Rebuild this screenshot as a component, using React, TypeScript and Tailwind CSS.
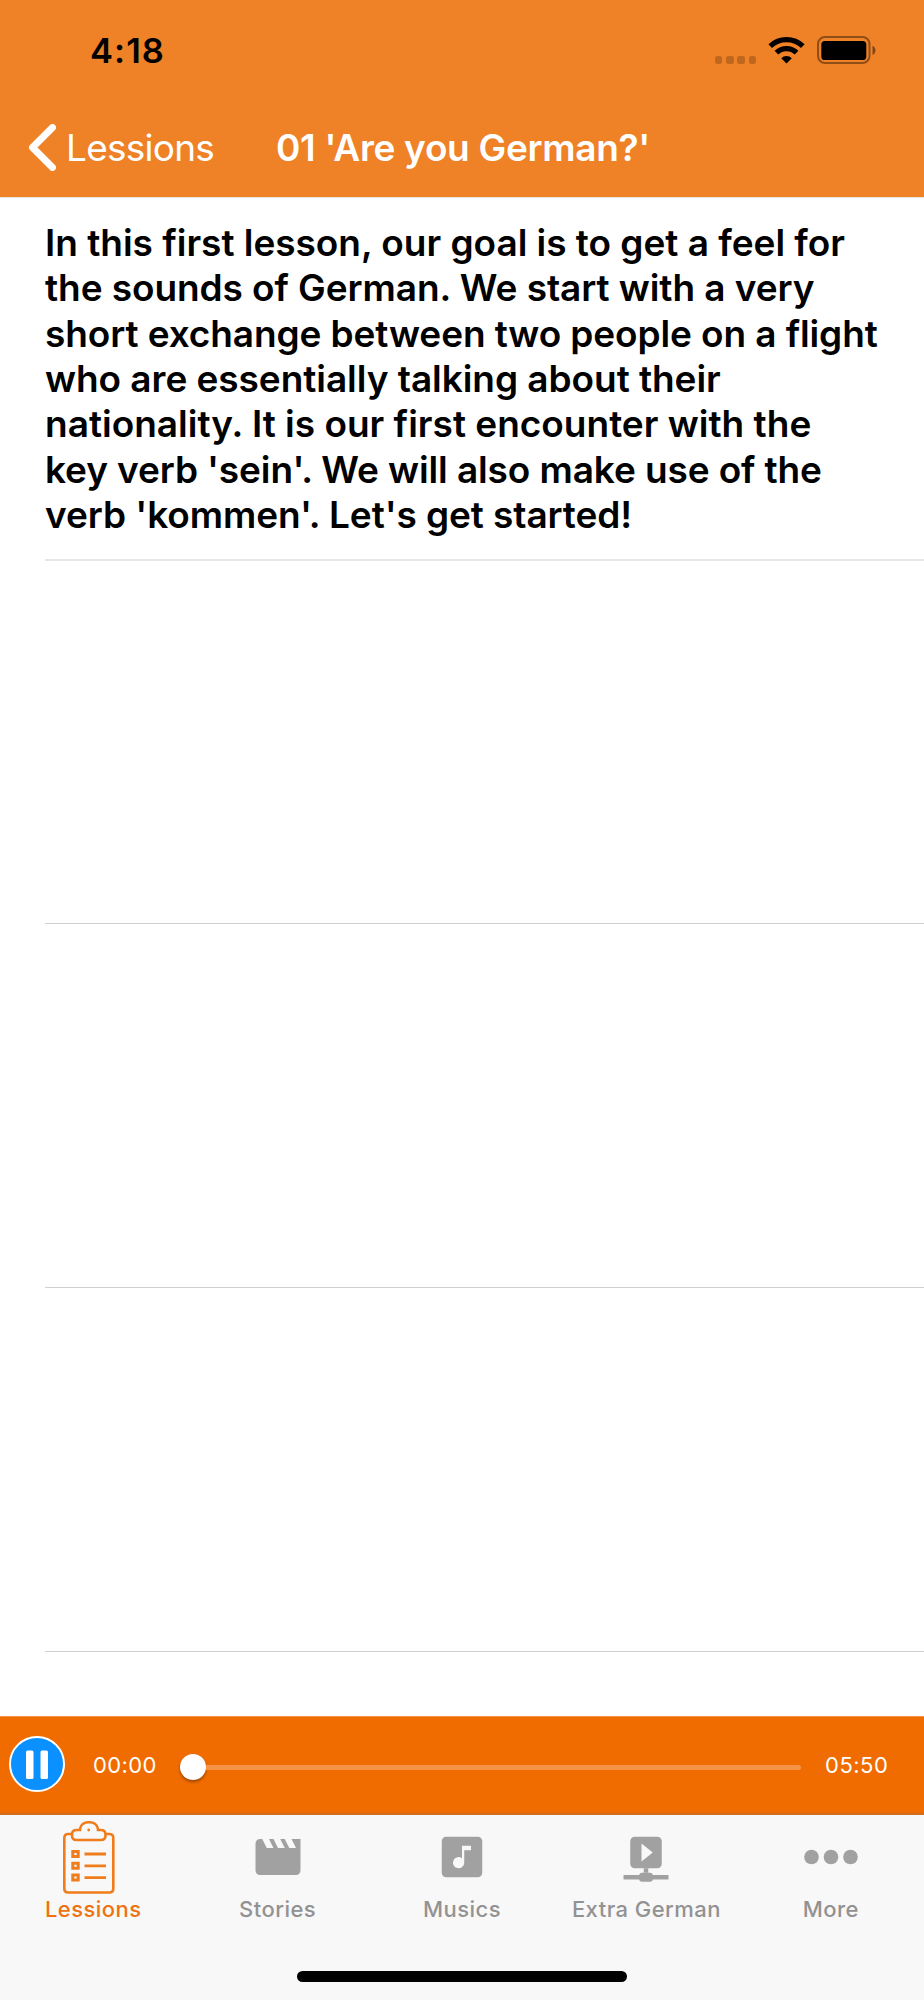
import type { ReactNode } from "react";

const intro = [
  { text: "In this first lesson, our goal is to get a feel for", tracking: "tracking-[-0.02px]" },
  { text: "the sounds of German. We start with a very", tracking: "tracking-[-0.07px]" },
  { text: "short exchange between two people on a flight", tracking: "tracking-[-0.1px]" },
  { text: "who are essentially talking about their", tracking: "tracking-[-0.05px]" },
  { text: "nationality. It is our first encounter with the", tracking: "tracking-[0px]" },
  { text: "key verb 'sein'. We will also make use of the", tracking: "tracking-[-0.11px]" },
  { text: "verb 'kommen'. Let's get started!", tracking: "tracking-[-0.08px]" },
];

const StatusBar = () => (
  <div className="flex h-[99px] items-start pl-[90px] pr-[47px] text-black">
    <span className="mt-[30px] text-[34.5px] leading-[42px] font-semibold tracking-[1.1px]">4:18</span>
    <div className="mt-[36px] ml-auto flex items-start">
      <div className="mt-[20px] flex gap-[3.7px]">
        {[0, 1, 2, 3].map((dot) => (
          <span key={dot} className="h-[7.5px] w-[7.5px] rounded-[2.5px] bg-black/20" />
        ))}
      </div>
      <svg className="ml-[12px]" width="37" height="28" viewBox="0 0 37 28" fill="none" stroke="black">
        <path d="M2.2 10.2a23.5 23.5 0 0 1 32.6 0" strokeWidth="5.2" />
        <path d="M8.4 16.6a14.6 14.6 0 0 1 20.2 0" strokeWidth="5.2" />
        <path d="M13.2 22.2a7.6 7.6 0 0 1 10.6 0L18.5 27.4z" fill="black" stroke="none" />
      </svg>
      <svg className="ml-[12px]" width="60" height="28" viewBox="0 0 60 28">
        <rect x="1" y="1" width="51.5" height="26" rx="7" fill="none" stroke="black" strokeOpacity="0.4" strokeWidth="2" />
        <rect x="4.3" y="5" width="45" height="19" rx="3.6" />
        <path d="M55.5 9.7c4 1.6 4 7.6 0 9.2z" fillOpacity="0.45" />
      </svg>
    </div>
  </div>
);

const NavBar = () => (
  <div className="flex h-[98px] items-start pl-[28px] text-white">
    <svg className="mt-[25px] shrink-0" width="28" height="47" viewBox="0 0 28 47" fill="none" stroke="currentColor">
      <path d="M24.5 3.5L4.500 23.5L24.500 43.5" strokeWidth="7" strokeLinecap="round" strokeLinejoin="round" />
    </svg>
    <span className="mt-[27px] ml-[10px] w-[210px] text-[37px] leading-[44px] font-normal tracking-[-0.75px]">
      Lessions
    </span>
    <h1 className="mt-[27px] text-[37px] leading-[44px] font-semibold tracking-[-0.3px] whitespace-nowrap">
      01 'Are you German?'
    </h1>
  </div>
);

const Player = () => (
  <div className="flex h-[99px] items-start border-t border-b-2 border-t-[#f4924a] border-b-[#cd6f21] bg-[#f06c00] pl-[9px] text-white">
    <svg className="mt-[19px] shrink-0" width="56" height="56" viewBox="0 0 56 56">
      <circle cx="28" cy="28" r="27" fill="#0a90ff" stroke="white" strokeWidth="2" />
      <rect x="17" y="14.5" width="7.5" height="28.5" rx="1.5" fill="white" />
      <rect x="31.5" y="14.5" width="7.5" height="28.5" rx="1.5" fill="white" />
    </svg>
    <span className="mt-[34px] ml-[28px] w-[87px] text-[22px] leading-[28px] tracking-[0.4px]">00:00</span>
    <div className="mt-[37px] flex items-center">
      <span className="h-[26px] w-[26px] rounded-full bg-white shadow-[0_2px_3px_rgba(0,0,0,0.35)]" />
      <span className="mt-px h-[4.5px] w-[595px] rounded-r-full bg-[#f59446]" />
    </div>
    <span className="mt-[34px] ml-[24px] text-[22px] leading-[28px] tracking-[0.5px]">05:50</span>
  </div>
);

const ClipboardIcon = () => (
  <svg width="52" height="73" viewBox="0 0 52 73" fill="none" stroke="#ef7d1c" strokeWidth="2.6">
    <path d="M9 13H5.300q-4 0-4 4v50.500q0 4 4 4h41q4 0 4-4V17q0-4-4-4h-4" />
    <path d="M13.500 9h3.500v-1c1-9 17-9 18 0v1h3q4.500 0 4.500 4.500v1q0 4.500-4.500 4.500h-24.500q-4.500 0-4.500-4.500v-1q0-4.500 4.500-4.500z" />
    <circle cx="25.700" cy="9" r="1.400" fill="#ef7d1c" stroke="none" />
    <path d="M9.800 30.500h5.400v5h-5.400zM9.800 42.300h5.400v5h-5.400zM9.800 54.100h5.400v5h-5.400z" strokeWidth="3" />
    <path d="M21.500 33h21.500M21.500 44.800h21.500M21.500 56.600h21.500" strokeWidth="2.800" />
  </svg>
);

const MovieIcon = () => (
  <svg width="54" height="54" viewBox="0 0 24 24" fill="#a1a1a1">
    <path d="M18 4l2 4h-3l-2-4h-2l2 4h-3l-2-4H8l2 4H7L5 4H4c-1.100 0-2 .9-2 2v12c0 1.100.9 2 2 2h16c1.100 0 2-.9 2-2V4z" />
  </svg>
);

const MusicIcon = () => (
  <svg width="54" height="54" viewBox="0 0 24 24" fill="#a1a1a1">
    <rect x="3" y="3" width="18" height="18" rx="2" />
    <path d="M12 7h4v2h-3v5.500a2.500 2.500 0 1 1-1-2z" fill="#f8f8f8" />
  </svg>
);

const NetworkIcon = () => (
  <svg width="54" height="54" viewBox="0 0 24 24" fill="#a1a1a1">
    <rect x="5" y="3" width="14" height="14" rx="2" />
    <path d="M10 6v8l5-4z" fill="#f8f8f8" />
    <path d="M11 17h2v2h-2zM2 20h20v2H2z" />
    <rect x="9" y="19" width="6" height="4" rx="1.200" />
  </svg>
);

const MoreIcon = () => (
  <svg width="54" height="54" viewBox="0 0 54 54" fill="#a1a1a1">
    <circle cx="7.500" cy="27" r="7.300" />
    <circle cx="27" cy="27" r="7.300" />
    <circle cx="46.500" cy="27" r="7.300" />
  </svg>
);

const Tab = ({ label, icon, active = false }: { label: string; icon: ReactNode; active?: boolean }) => (
  <div className={`flex flex-col items-center ${active ? "text-[#ee7310]" : "text-[#929292]"}`}>
    <div className={active ? "h-[80px] pt-[6px] pr-[8px]" : "h-[80px] pt-[15px]"}>{icon}</div>
    <span className="text-[22px] leading-[28px] font-medium tracking-[0.45px] whitespace-nowrap">{label}</span>
  </div>
);

const App = () => {
  return (
    <div className="flex h-[2000px] w-[924px] flex-col overflow-hidden bg-white font-['Inter',sans-serif]">
      <header className="h-[197px] shrink-0 bg-[#ef8127]">
        <StatusBar />
        <NavBar />
      </header>

      {/* Lesson rows */}
      <main className="h-[1519px] shrink-0 overflow-hidden border-t border-[#e8e4e0] pl-[45px]">
        <div className="h-[363px] border-b-2 border-[#e6e6e6] pt-[22px]">
          <p className="text-[37px] leading-[45.33px] font-semibold text-black">
            {intro.map((line) => (
              <span key={line.text} className={`block whitespace-nowrap ${line.tracking}`}>
                {line.text}
              </span>
            ))}
          </p>
        </div>
        <div className="h-[363px] border-b border-[#d0d0d0]" />
        <div className="h-[364px] border-b border-[#d0d0d0]" />
        <div className="h-[364px] border-b border-[#d0d0d0]" />
      </main>

      <Player />

      {/* Bottom tabs */}
      <nav className="flex h-[185px] flex-col items-center bg-[#f8f8f8]">
        <div className="grid h-[156px] w-full grid-cols-5 pr-px pl-px">
          <Tab label="Lessions" icon={<ClipboardIcon />} active />
          <Tab label="Stories" icon={<MovieIcon />} />
          <Tab label="Musics" icon={<MusicIcon />} />
          <Tab label="Extra German" icon={<NetworkIcon />} />
          <Tab label="More" icon={<MoreIcon />} />
        </div>
        <div className="h-[11px] w-[330px] rounded-full bg-black" />
      </nav>
    </div>
  );
};

export default App;
